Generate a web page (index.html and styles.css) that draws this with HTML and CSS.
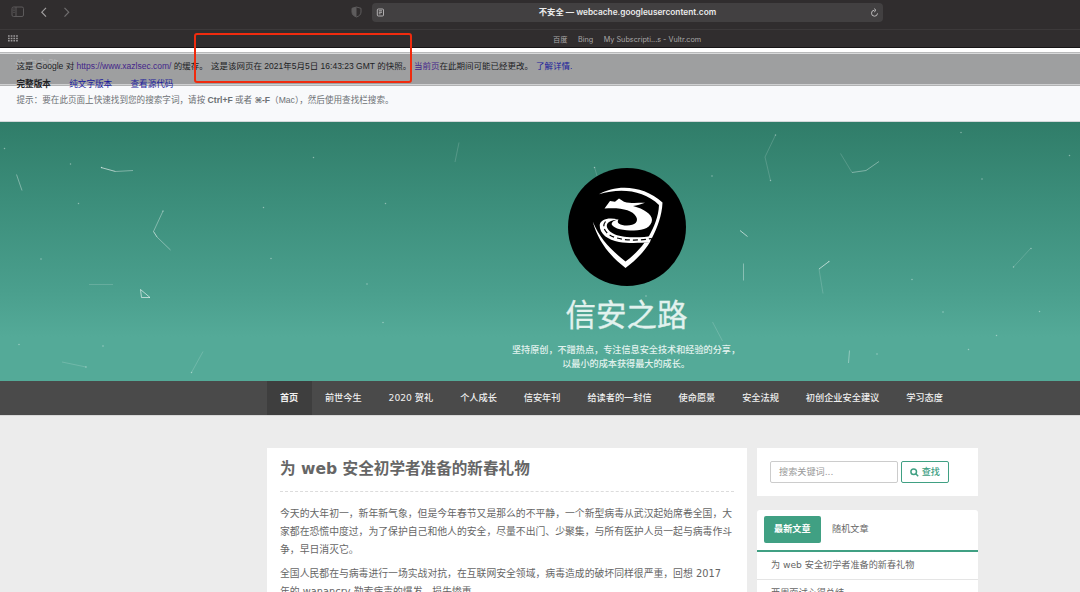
FILE: index.html
```html
<!DOCTYPE html>
<html lang="zh-CN">
<head>
<meta charset="utf-8">
<title>信安之路</title>
<link rel="stylesheet" href="styles.css">
</head>
<body>
<div class="window">
  <header class="toolbar">
    <div class="nav-icons">
      <svg class="i-sidebar" width="14" height="12" viewBox="0 0 14 12"><rect x="1" y="1" width="11.5" height="9.5" rx="1.5"/><path d="M5 1v9.5M2.3 3h1.4M2.3 4.7h1.4M2.3 6.4h1.4"/></svg>
      <svg class="i-back" width="8" height="12" viewBox="0 0 8 12"><path d="M6 1.8L1.8 6.200L6 10.6"/></svg>
      <svg class="i-fwd" width="8" height="12" viewBox="0 0 8 12"><path d="M1.500 1.8L5.700 6.200L1.500 10.6"/></svg>
    </div>
    <svg class="i-shield" width="11" height="12" viewBox="0 0 11 12"><path class="half" d="M5.5 1L1 2.3V6c0 2.6 2 4.2 4.5 5z"/><path class="line" d="M5.5 1L10 2.3V6c0 2.6-2 4.2-4.5 5C3 10.2 1 8.6 1 6V2.3z"/></svg>
    <div class="address">
      <svg class="i-reader" width="9" height="9" viewBox="0 0 9 9"><rect x="1.3" y="1" width="6.2" height="7" rx="1"/><path d="M2.8 2.8h3.2M2.8 4.3h3.2M2.8 5.8h1.7"/></svg>
      <span class="url">不安全 — webcache.googleusercontent.com</span>
      <svg class="i-reload" width="9" height="10" viewBox="0 0 9 10"><path d="M4.5 2.2A3 3 0 1 0 7.5 5.4M4.2 .6L6 2.3L4.2 4"/></svg>
    </div>
  </header>
  <div class="bookmarks">
    <svg class="i-grid" width="10" height="8" viewBox="0 0 10 8"><path d="M0 1h10M0 3.4h10M0 5.8h10"/></svg>
    <div class="marks"><span>百度</span><span>Bing</span><span>My Subscripti...s - Vultr.com</span></div>
  </div>

  <section class="cache">
    <div class="veil"></div>
    <span class="ghost">信安之路</span>
    <p class="line1"><span class="seg-a">这是 Google 对 <a>https://www.xazlsec.com/</a> 的缓存。</span><span class="seg-b">这是该网页在 2021年5月5日 16:43:23 GMT 的快照。</span><span class="seg-c"><a>当前页</a>在此期间可能已经更改。</span><a class="more">了解详情.</a></p>
    <p class="line2"><b>完整版本</b><a>纯文字版本</a><a>查看源代码</a></p>
    <p class="line3">提示：要在此页面上快速找到您的搜索字词，请按 <b>Ctrl+F</b> 或者 <b><span class="cmd">⌘</span>-F</b>（Mac），然后使用查找栏搜索。</p>
    <div class="marker"></div>
  </section>

  <section class="hero">
    <svg class="stars" width="1080" height="259" viewBox="0 122 1080 259">
      <g class="strong">
        <path d="M101 167.5L115.500 171.5M140.5 289.5L141.5 297.5H150L140.5 289.500M153.5 231.5L157 237M740 230.5L747.5 236.5M819 269L829 261.5"/>
      </g>
      <g class="medium">
        <path d="M115.5 171.5L133 170.5M16.5 174.5L22 190.5M163 211L153.5 231.5M157 237L170.5 250M743.5 263.5L743.5 280.5M852 172.5L866 170.5L879 161.5M849.5 350.5L848.5 363"/>
      </g>
      <g class="faint">
        <path d="M89 284.5H113M62 362L86 367M203 351.5L191.5 372.5M459 142.5L455 162M775.5 135L765 157L770.5 180.5M840.5 153.5L852 172.5M819 269L823 293.5M712.5 322L722.5 341M1030.5 248.5L1013.5 267M594.5 167L597 176"/>
      </g>
      <path class="dots" d="M4.5 148.5h0M70.5 164h0M78.5 203.5h0M313.5 157.5h0M263.5 207.5h0M385.5 203.5h0M41 259h0M271 258.5h0M367 284h0M19 344.5h0M86 367h0M191.5 372.5h0M383 322.5h0M103 346h0M163 211h0M775.5 135h0M770.5 180.5h0M961 132.5h0M1069.5 155.5h0M982 179h0M712 176h0M912 279.5h0M1031 248.5h0M1013.5 267h0M943 312h0M1039.5 311.5h0M996.5 335.5h0M968.5 349.5h0M877 354h0M646 296h0M101.5 167.5h0M829 261.5h0M594.500 167.500h0"/>
    </svg>
    <svg class="logo" width="118" height="118" viewBox="0 0 118 118">
      <circle cx="59" cy="59" r="59"/>
      <path class="w" d="M31 26.300C48 16 76 17 94.500 34.500C94 48 89 60 84 70L80.500 69C86 59 90.500 49 91 37C76 22 52 19.500 31 26.300Z"/>
      <path class="w" d="M24.700 53.500C32 71 43 82 57.500 93.500C65 88 72 81 76.500 74.500L82 74C76 84 67 93 57.500 100C41 87 30 73 24.700 53.500Z"/>
      <path class="w" d="M36.500 40.500L42 33L47 33.700L51 30.500L56 33.700C64 36 71 34.500 77 34.800C73 36.500 69 37.300 65 38C76 41 84 46 84 52C83.500 59 76 62.500 66 62.500C56 62.500 46 61 43.700 56.500C43.500 54 46 52 50.500 51.500C48 55 52 57.500 59 57.500C67 57.500 71 53.500 68 48.500C64 42 54 39.500 36.500 40.500Z"/>
      <path class="w" d="M50.500 51.500C40 49 32.500 51.500 31.700 57C31.500 66 40 72 51 74C61 75.500 73 75 82 74L84 68C73 70 56 70 47 66.500C39 63 36.500 57 41 54C43.500 52.300 47 52 50.500 51.500Z"/>
      <path class="road" d="M37.500 53.500C32.500 60 39 67.500 49 70C59 72.800 72 72.500 83 70.500"/>
    </svg>
    <h1>信安之路</h1>
    <p>坚持原创，不蹭热点，专注信息安全技术和经验的分享，<br>以最小的成本获得最大的成长。</p>
  </section>

  <nav class="menu">
    <a class="current">首页</a><a>前世今生</a><a>2020 贺礼</a><a>个人成长</a><a>信安年刊</a><a>给读者的一封信</a><a>使命愿景</a><a>安全法规</a><a>初创企业安全建议</a><a>学习态度</a>
  </nav>

  <main class="content">
    <article class="post">
      <h2>为 web 安全初学者准备的新春礼物</h2>
      <p>今天的大年初一，新年新气象，但是今年春节又是那么的不平静，一个新型病毒从武汉起始席卷全国，大<br>家都在恐慌中度过，为了保护自己和他人的安全，尽量不出门、少聚集，与所有医护人员一起与病毒作斗<br>争，早日消灭它。</p>
      <p>全国人民都在与病毒进行一场实战对抗，在互联网安全领域，病毒造成的破坏同样很严重，回想 2017<br>年的 wanancry 勒索病毒的爆发，损失惨重。</p>
    </article>
    <aside class="side">
      <div class="search">
        <div class="field">搜索关键词...</div>
        <div class="btn"><svg width="9" height="9" viewBox="0 0 9 9"><circle cx="3.7" cy="3.7" r="2.8"/><path d="M5.8 5.8L8.2 8.2"/></svg>查找</div>
      </div>
      <div class="panel">
        <div class="tabs"><span class="tab on">最新文章</span><span class="tab">随机文章</span></div>
        <div class="item">为 web 安全初学者准备的新春礼物</div>
        <div class="item">两周面试心得总结</div>
      </div>
    </aside>
  </main>
</div>
</body>
</html>
```

FILE: styles.css
```css
* { box-sizing: border-box; }
body { margin: 0; background: #ececec; font-family: "DejaVu Sans", "Noto Sans CJK SC", sans-serif; }
h1, h2, p { margin: 0; }
svg { display: block; flex: none; fill: none; }
.window { width: 1080px; height: 592px; overflow: hidden; }

.toolbar { height: 29px; display: flex; align-items: flex-start; background: #302d2e; padding-top: 3px; }
.nav-icons { width: 351px; padding: 3px 0 0 11px; display: flex; }
.nav-icons svg { stroke-width: 1.2; }
.nav-icons .i-sidebar { stroke: #5c5a5b; stroke-width: 1; margin-right: 15px; }
.nav-icons .i-back { stroke: #a09e9f; margin-right: 15px; }
.nav-icons .i-fwd { stroke: #706e6f; }
.i-shield { margin: 3px 10px 0 0; }
.i-shield .half { fill: #5e5c5d; }
.i-shield .line { stroke: #5e5c5d; stroke-width: 1; }
.address { width: 511px; height: 19px; border-radius: 4px; background: #424041; display: flex; align-items: center; padding: 0 4px; }
.i-reader { stroke: #bdbbbc; stroke-width: .9; }
.url { flex: 1; text-align: center; font: 600 8.3px/19px Inter, "Noto Sans CJK SC", sans-serif; color: #ebebeb; white-space: nowrap; }
.i-reload { stroke: #bdbbbc; stroke-width: 1; }
.bookmarks { height: 19px; display: flex; background: #302d2e; border-top: 1px solid #3c393a; border-bottom: 1px solid #171516; padding: 5px 0 0 8px; }
.i-grid { stroke: #9a9899; stroke-width: 1.5; stroke-dasharray: 1.7 1; }
.marks { margin-left: 535px; display: flex; gap: 10.5px; padding-top: 1px; font: 7.25px/8px Inter, "Noto Sans CJK SC", sans-serif; color: #a9a7a8; white-space: nowrap; }

.cache { position: relative; height: 74px; padding: 9px 0 0 16.5px; background: #f8f9fb; border-bottom: 1px solid #d3d8da; font: 8.5px/18px "Liberation Sans", "Noto Sans CJK SC", sans-serif; color: #202124; white-space: nowrap; }
.cache p { position: relative; display: flex; height: 18px; }
.cache a { color: #1a1a9c; }
.line1 .seg-a, .line1 .seg-b, .line1 .seg-c { display: block; white-space: pre; }
.line1 .seg-a { width: 194.5px; }
.line1 .seg-b { width: 203px; }
.line1 .seg-c { width: 122px; }
.line1 .seg-a a, .line1 .seg-c a { color: #43258a; }
.line2 { gap: 18.3px; }
.line2 b, .line2 a { font-size: 8.6px; }
.cache .line3 { display: block; height: 14px; line-height: 14px; color: #6c7074; font-size: 8.58px; }
.cmd { font: 700 8px/1 "DejaVu Sans", sans-serif; }
.veil { position: absolute; left: 0; top: 0; width: 1080px; height: 38px; border-top: 4px solid #fff; background: linear-gradient(#b9babb 0 1px, #d9dadb 1px 2px, #9e9fa0 2px 32px, #cfd0d1 32px 33px, #b1b2b3 33px); }
.ghost { position: absolute; left: 15px; top: 8px; font-size: 11px; color: #b4b5b6; }
.marker { position: absolute; left: 194px; top: -15px; width: 218px; height: 50px; border: 2px solid #f02b0e; border-radius: 3px; }

.hero { position: relative; height: 259px; padding-top: 45.500px; background: linear-gradient(#307d69, #3c8e7b 31%, #4a9f8d 65%, #54aa98 83%, #54aa98); display: flex; flex-direction: column; align-items: center; color: #e2f2ee; text-align: center; }
.stars { position: absolute; left: 0; top: 0; stroke: #fff; }
.strong { opacity: .6; }
.medium { opacity: .36; }
.faint { opacity: .16; }
.dots { opacity: .42; stroke-width: 1.5; stroke-linecap: round; }
.logo { margin-left: 174px; z-index: 1; }
.logo circle { fill: #000; }
.logo .w { fill: #fff; }
.logo .road { stroke: #000; stroke-width: 1.2; stroke-dasharray: 5 3; }
.hero h1 { width: 140px; margin: 5.500px 0 0 173px; font: 400 30.5px/44px "Noto Sans CJK SC", sans-serif; -webkit-text-stroke: .3px #e2f2ee; }
.hero p { width: 260px; margin: 7px 0 0 172px; font: 500 9.15px/14px "Noto Sans CJK SC", sans-serif; white-space: nowrap; }

.menu { height: 34px; padding-left: 266.5px; background: #4a4a4a; display: flex; font-size: 9.2px; line-height: 33px; font-weight: 500; color: #f0f0f0; white-space: nowrap; }
.menu a { padding: 0 13.45px; }
.menu .current { width: 45px; background: #3e3e3e; font-weight: 700; }

.content { height: 177px; padding: 32px 0 0 267px; border-top: 1px solid #d8d8d8; display: flex; gap: 10px; align-items: flex-start; color: #666; }
.post { width: 480px; height: 200px; padding: 0 13px; background: #fff; }
.post h2 { height: 44px; padding-top: 6px; border-bottom: 1px dashed #dcdcdc; font-size: 15.6px; line-height: 31px; color: #666; white-space: nowrap; }
.post p { font-size: 9.84px; line-height: 17.8px; white-space: nowrap; }
.post h2 + p { margin: 13px 0 7px; }
.side { width: 221px; }
.search { height: 48px; padding: 13px; display: flex; gap: 3px; background: #fff; }
.field { width: 128px; height: 22px; border: 1px solid #ccc; border-radius: 2px; padding-left: 8px; font-size: 9.15px; line-height: 20px; color: #999; }
.btn { width: 47.5px; height: 22px; border: 1px solid #40a083; border-radius: 2px; display: flex; align-items: center; justify-content: center; gap: 3px; font-size: 9.15px; line-height: 20px; font-weight: 500; color: #40a083; }
.btn svg { stroke: #40a083; stroke-width: 1.5; }
.panel { margin-top: 14px; height: 130px; border-radius: 3px; background: #fff; }
.tabs { height: 42px; padding: 6px 7px; border-bottom: 2px solid #40a083; display: flex; font-size: 9.15px; line-height: 27px; white-space: nowrap; }
.tab { height: 27px; padding: 0 11px; }
.tab.on { width: 57px; padding: 0 10px; border-radius: 2px; background: #40a083; color: #fff; font-weight: 700; }
.item { height: 28px; padding-left: 14px; border-bottom: 1px solid #e5e5e5; font-size: 9.15px; line-height: 27px; white-space: nowrap; }
```
